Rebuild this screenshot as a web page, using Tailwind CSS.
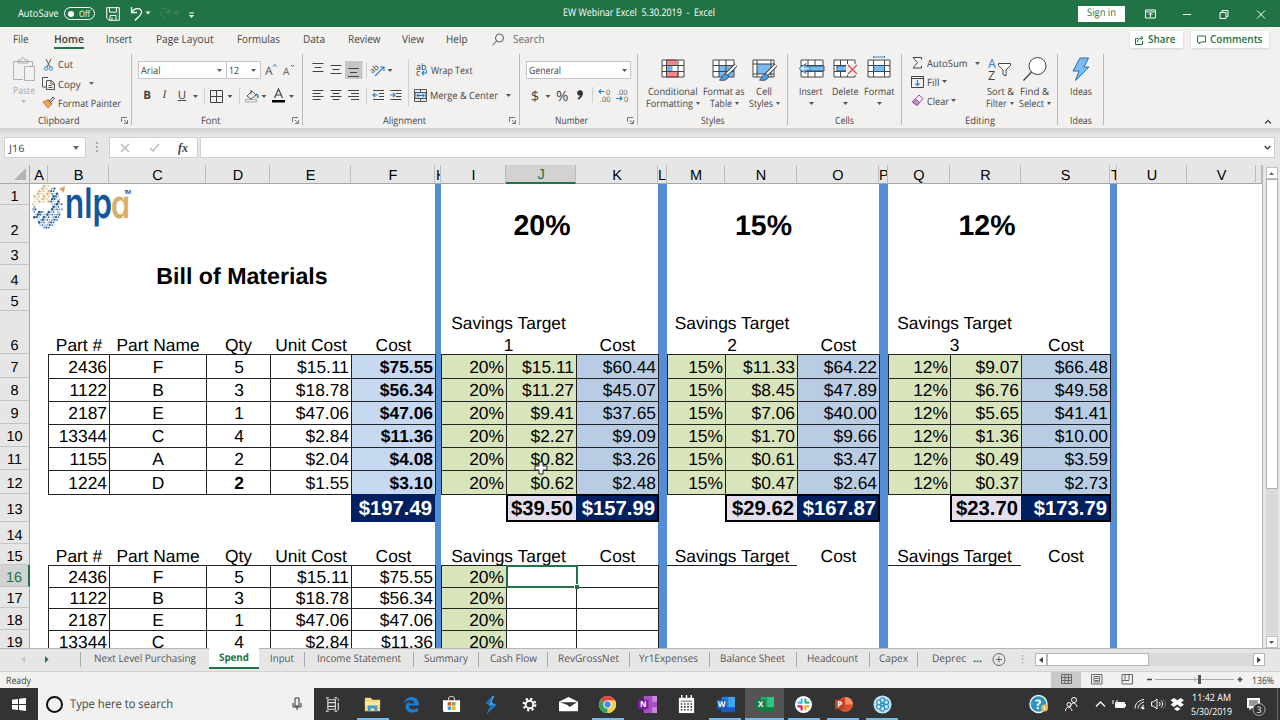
<!DOCTYPE html>
<html lang="en">

<head>
    <meta charset="UTF-8" />
    <meta name="viewport" content="width=device-width, initial-scale=1.0" />
    <title>EW Webinar Excel 5.30.2019 - Excel</title>
    <script src="https://cdn.jsdelivr.net/npm/@tailwindcss/browser@4"></script>
</head>

<body class="w-[1280px] h-[720px] overflow-hidden flex flex-col bg-[#e6e6e6] font-['Open_Sans','Noto_Sans',sans-serif] text-[10px] leading-none text-[#444] whitespace-nowrap [text-rendering:geometricPrecision]">

    <!-- title bar -->
    <header class="h-[27px] shrink-0 bg-[#217346] text-white flex items-center">
        <div class="w-[500px] flex items-center pl-[18px]">
            <span class="w-[46px]"><span data-w="40.5" class="text-[10.5px]">AutoSave</span></span>
            <span class="w-[31px] h-[13px] border border-white rounded-full flex items-center pl-[3px] gap-[5px]">
                <i class="size-[6px] rounded-full bg-white"></i><span data-w="11" class="text-[9px]">Off</span>
            </span>
            <svg class="ml-[11px]" width="14" height="14" viewBox="0 0 14 14" fill="none" stroke="#fff"><path d="M.7.7h12.6v12.6H3L.7 11zM3.5.7v4.5h7V.7M4 13V8.500h6V13M6 10.500V13" /></svg>
            <svg class="ml-[10px]" width="65" height="16" viewBox="0 0 65 16" fill="none"><path d="M1.500 1v5.500h5.500M1.500 6.500C4.500 1 12 1.500 11.500 6.500 11 10 7.500 11 5 14.500" stroke="#fff" stroke-width="1.300" /><path d="M15.500 5.500h5l-2.500 3zM59 9h5l-2.500 3zM59 6.500h5v1h-5z" fill="#fff" /><path d="M40 1v5.500h-5.500M40 6.500C37 1 29.500 1 30 6.500 30.500 10 34 11 36 14M43.500 6h5l-2.500 3z" stroke="#43875f" /></svg>
        </div>
        <div class="flex-1 pl-[63px] -mt-[2px]"><span data-w="152" class="text-[10.5px] whitespace-pre">EW Webinar Excel  5.30.2019  -  Excel</span></div>
        <div class="w-[47px] h-[16px] bg-white text-[#217346] flex items-center justify-center"><span data-w="29" class="text-[10.5px]">Sign in</span></div>
        <svg class="ml-[20px] mr-[13px]" width="122" height="14" viewBox="0 0 122 14" fill="none" stroke="#fff"><path d="M.5 3h10v8h-10zM.5 5h10M5.500 10V6.500M3.500 8l2-2 2 2" /><path d="M38 7.500h8M75 5.500h6v6h-6zM77 5V3.500h6v6h-1.500M112 3.500l8 8M120 3.500l-8 8" /></svg>
    </header>

    <!-- ribbon tabs -->
    <nav class="h-[25px] shrink-0 bg-[#f2f1f0] flex items-center text-[11px] pl-[13px]">
        <span class="w-[41px]"><span data-w="15.5">File</span></span>
        <span class="w-[52px] h-[22px] self-start pt-[7px]"><span data-w="30" class="font-semibold h-[15px] border-b-2 border-[#217346]">Home</span></span>
        <span class="w-[50px]"><span data-w="26">Insert</span></span>
        <span class="w-[81px]"><span data-w="57.5">Page Layout</span></span>
        <span class="w-[66px]"><span data-w="43">Formulas</span></span>
        <span class="w-[45px]"><span data-w="22">Data</span></span>
        <span class="w-[54px]"><span data-w="32.5">Review</span></span>
        <span class="w-[44px]"><span data-w="22">View</span></span>
        <span class="w-[46px]"><span data-w="21.500">Help</span></span>
        <svg class="mr-[8px]" width="13" height="14" viewBox="0 0 13 14" fill="none" stroke="#555"><circle cx="7.500" cy="5" r="4" /><path d="M4.500 8L.5 12.500" /></svg>
        <span class="w-[617px]"><span data-w="31.5" class="text-[#666]">Search</span></span>
        <div class="w-[53px] h-[17px] bg-white shadow-sm text-[#217346] font-semibold flex items-center pl-[5px] gap-[4px]">
            <svg width="9" height="10" viewBox="0 0 9 10" fill="none" stroke="#217346"><path d="M3 3.500H.5v6h7V6M2.500 7c0-3 2-4 5-4M5.500 1l2.500 2-2.500 2" /></svg>
            <span data-w="27.5">Share</span>
        </div>
        <div class="ml-[8px] w-[78px] h-[17px] bg-white shadow-sm text-[#217346] font-semibold flex items-center pl-[6px] gap-[4px]">
            <svg width="9" height="10" viewBox="0 0 9 10" fill="none" stroke="#217346"><path d="M.5 1h8v6H4L2 9V7H.5z" /></svg>
            <span data-w="52.5">Comments</span>
        </div>
    </nav>

    <!-- ribbon -->
    <section class="h-[76px] shrink-0 bg-[#f2f1f0] flex items-start pt-[2px]">

        <div class="w-[132px] h-[71px] border-r border-[#b9b9b9] flex flex-col">
            <div class="h-[61px] flex">
                <div class="w-[42px] pl-[5px] pt-[3px] flex flex-col items-center text-[#aaa]">
                    <svg width="24" height="26" viewBox="0 0 24 26" fill="none" stroke="#b0b0b0"><path d="M1.500 4.500h19v5M11 22.500H1.500v-18M6 6V3h3c0-3 4-3 4 0h3v3zM12.500 9.500h10v14h-10z" fill="#f2f1f0" /></svg>
                    <span class="mt-[2px]" data-w="22">Paste</span>
                    <svg class="mt-[5px]" width="5" height="3"><path d="M0 0h5L2.500 3z" fill="#bbb" /></svg>
                </div>
                <div>
                    <div class="h-[20px] flex items-center"><svg class="mr-[3px]" width="13" height="13" viewBox="0 0 13 13" fill="none"><path d="M4 1l4 8M9 1L5 9" stroke="#555" /><circle cx="4" cy="10.500" r="1.700" stroke="#2f86cf" /><circle cx="9" cy="10.500" r="1.700" stroke="#2f86cf" /></svg><span data-w="15">Cut</span></div>
                    <div class="h-[19px] flex items-center"><svg class="mr-[3px]" width="13" height="13" viewBox="0 0 13 13" fill="none" stroke="#555"><path d="M4 10H.5V.5H6M4.500 3.500h5l3 3v6h-8zM9 3.500V7h3M6.500 8.500h3M6.500 10.500h4" /></svg><span data-w="22.500">Copy</span><svg class="ml-[8px]" width="5" height="3"><path d="M0 0h5L2.500 3z" fill="#666" /></svg></div>
                    <div class="h-[19px] flex items-center"><svg class="mr-[3px]" width="13" height="13" viewBox="0 0 13 13" fill="none"><path d="M1 6l5 6 4-4-4-4z" fill="#f0a35c" stroke="#d9782d" /><path d="M6 3.500L9.500 7.500M7.500 5L11 1l1.500 1.500L9 6" stroke="#444" /></svg><span data-w="63">Format Painter</span></div>
                </div>
            </div>
            <div class="flex pl-[38px] pt-[2px]"><span data-w="41.5">Clipboard</span><svg class="ml-auto mr-[3px] mt-[2px]" width="7" height="7" fill="none" stroke="#777"><path d="M.5 5V.5H6M3 3l3 3M6.500 3v3.500H3" /></svg></div>
        </div>

        <div class="w-[171px] h-[71px] border-r border-[#b9b9b9] flex flex-col">
            <div class="h-[61px] pl-[6px] pt-[7px]">
                <div class="flex items-center h-[18px]">
                    <div class="w-[89px] h-[18px] bg-white border border-[#c6c6c6] flex items-center justify-between pl-[2px] pr-[4px]"><span data-w="19.5">Arial</span><svg width="5" height="3"><path d="M0 0h5L2.500 3z" fill="#555" /></svg></div>
                    <div class="w-[35px] h-[18px] -ml-px bg-white border border-[#c6c6c6] flex items-center justify-between pl-[2px] pr-[4px]"><span data-w="10">12</span><svg width="5" height="3"><path d="M0 0h5L2.500 3z" fill="#555" /></svg></div>
                    <svg class="ml-[4px]" width="32" height="14" viewBox="0 0 32 14" fill="none"><text x="0" y="12" font-size="12" fill="#555">A</text><path d="M8 3.500l1.800-2 1.800 2M26 2l1.500 1.700L29 2" stroke="#2f6cb0" /><text x="18" y="12" font-size="10" fill="#555">A</text></svg>
                </div>
                <div class="flex items-center h-[16px] mt-[9px] text-[11.500px]">
                    <span class="w-[18px] text-center font-bold">B</span>
                    <span class="w-[17px] text-center italic font-['Liberation_Serif']">I</span>
                    <span class="w-[18px] text-center underline">U</span>
                    <svg width="98" height="18" viewBox="191 86 98 18" fill="none"><path d="M193 94h5l-2.500 3zM227.500 94h5l-2.500 3zM261.500 94h5l-2.500 3z" fill="#555" /><path d="M204.500 87v16M239.500 87v16" stroke="#d0d0d0" /><path d="M210.500 89.500h12v12h-12zM216.500 89.500v12M210.500 95.500h12" stroke="#444" /><path d="M247 95l5-5 4 4-5 4zM251 89v4" stroke="#555" /><path d="M256 93c2 1 2 3 1.500 4" stroke="#2f86cf" stroke-width="1.500" /><path d="M245.500 98.500h11v2.500h-11z" stroke="#aaa" fill="#eee" /><path d="M274.500 97L278.500 88l4 9M276 94h5" stroke="#444" stroke-width="1.200" /><path d="M272 99h13v2.500h-13z" fill="#000" /></svg>
                    <svg width="5" height="3"><path d="M0 0h5L2.500 3z" fill="#555" /></svg>
                </div>
            </div>
            <div class="flex pl-[69px] pt-[2px]"><span data-w="19.5">Font</span><svg class="ml-auto mr-[3px] mt-[2px]" width="7" height="7" fill="none" stroke="#777"><path d="M.5 5V.5H6M3 3l3 3M6.500 3v3.500H3" /></svg></div>
        </div>

        <div class="w-[217px] h-[71px] border-r border-[#b9b9b9] flex flex-col">
            <div class="h-[61px] flex">
                <svg class="shrink-0" width="109" height="55" viewBox="303 54 109 55" fill="none">
                    <path d="M345 61h17.500v18H345z" fill="#c8c6c4" />
                    <path d="M312.500 63.500h11M314.500 67.500h7M312.500 71.500h11M330.500 65.500h11M332.500 69.500h7M330.500 73.500h11M348 68.500h11M350 72.500h7M348 76.500h11" stroke="#444" />
                    <path d="M312.500 90.500h11M312.500 93.500h8M312.500 96.500h11M312.500 99.500h8M330.500 90.500h11M332.500 93.500h7M330.500 96.500h11M332.500 99.500h7M348 90.500h11M351 93.500h8M348 96.500h11M351 99.500h8M373 90.500h11M379 93.500h5M379 96.500h5M373 99.500h11M390.500 90.500h11M396 93.500h5.500M396 96.500h5.500M390.500 99.500h11" stroke="#444" />
                    <path d="M378 95h-5M375 93l-2 2 2 2M390 95h5M393 93l2 2-2 2M375 76l9-9M380 67h4v4" stroke="#2f86cf" stroke-width="1.200" />
                    <path d="M366.500 62v16M366.500 88v16M408.500 59v47" stroke="#d0d0d0" />
                    <path d="M387.500 69h5l-2.500 3z" fill="#555" />
                    <text x="370" y="72" font-size="8" fill="#444" transform="rotate(-40 374 70)">ab</text>
                </svg>
                <div class="pt-[7px]">
                    <div class="h-[18px] flex items-center"><svg class="mr-[2px] ml-[3px]" width="14" height="14" viewBox="0 0 14 14" fill="none"><text x="1" y="6.500" font-size="9" fill="#444">ab</text><text x="1" y="13" font-size="9" fill="#444">c</text><path d="M11.500 7v3H7M9 8l-2 2 2 2" stroke="#2f86cf" stroke-width="1.200" /></svg><span data-w="41.5">Wrap Text</span></div>
                    <div class="h-[18px] mt-[7px] flex items-center"><svg class="mr-[3px] ml-[2px]" width="13" height="13" viewBox="0 0 13 13" fill="none"><path d="M.5.5h12v12H.5zM6.500.5v3M6.500 10v2.500" stroke="#555" /><path d="M1 3.500h11v6H1z" fill="#c5e3f8" stroke="#555" /><path d="M3 6.500h7M4.500 4.800L2.800 6.500l1.700 1.700M8.500 4.800l1.700 1.700-1.700 1.700" stroke="#1f6fb8" /></svg><span data-w="68">Merge &amp; Center</span><svg class="ml-[8px]" width="5" height="3"><path d="M0 0h5L2.500 3z" fill="#555" /></svg></div>
                </div>
            </div>
            <div class="flex pl-[80px] pt-[2px]"><span data-w="43">Alignment</span><svg class="ml-auto mr-[3px] mt-[2px]" width="7" height="7" fill="none" stroke="#777"><path d="M.5 5V.5H6M3 3l3 3M6.500 3v3.500H3" /></svg></div>
        </div>

        <div class="w-[118px] h-[71px] border-r border-[#b9b9b9] flex flex-col">
            <div class="h-[61px] pl-[6px] pt-[7px]">
                <div class="w-[105px] h-[18px] bg-white border border-[#c6c6c6] flex items-center justify-between pl-[2px] pr-[3px]"><span data-w="32">General</span><svg width="5" height="3"><path d="M0 0h5L2.500 3z" fill="#555" /></svg></div>
                <svg class="mt-[6px]" width="106" height="20" viewBox="526 85 106 20" fill="none">
                    <text x="531" y="101" font-size="14" fill="#444" textLength="7.500">$</text>
                    <text x="556" y="101" font-size="14" fill="#444" textLength="12.500" lengthAdjust="spacingAndGlyphs">%</text>
                    <circle cx="580" cy="93" r="2.800" fill="#333" /><path d="M582 93c0 3-1.500 4.500-4 6" stroke="#333" stroke-width="1.800" />
                    <path d="M545.500 95h5l-2.500 3z" fill="#555" /><path d="M592.500 87v16" stroke="#d0d0d0" />
                    <text x="606" y="95" font-size="7.500" fill="#555">0</text><text x="600" y="101.500" font-size="7.500" fill="#555">.00</text>
                    <text x="617" y="95" font-size="7.500" fill="#555">.00</text><text x="624" y="101.500" font-size="7.500" fill="#555">0</text>
                    <path d="M604.500 91.500h-6M601 89.500l-2 2 2 2M616 98.500h6M620 96.500l2 2-2 2" stroke="#2f86cf" stroke-width="1.200" />
                </svg>
            </div>
            <div class="flex pl-[35px] pt-[2px]"><span data-w="33">Number</span><svg class="ml-auto mr-[3px] mt-[2px]" width="7" height="7" fill="none" stroke="#777"><path d="M.5 5V.5H6M3 3l3 3M6.500 3v3.500H3" /></svg></div>
        </div>

        <div class="w-[150px] h-[71px] border-r border-[#b9b9b9] flex flex-col">
            <div class="h-[61px] flex pl-[6px] pt-[2px]">
                <div class="w-[57px] flex flex-col items-center">
                    <svg width="24" height="26" viewBox="0 0 24 26" fill="none"><path d="M1 4h22v17H1z" fill="#fff" /><path d="M5.500 4h9.500v5.500H5.500zM5.500 15.500H17V21H5.500z" fill="#f8878b" stroke="#d6484d" /><path d="M5.500 9.500h6v6h-6z" fill="#6cb2ec" /><path d="M1 4h22v17H1zM5.500 4v17M17 4v17M1 9.500h22M1 15.500h22" stroke="#444" /></svg>
                    <span class="mt-[4px]" data-w="49.5">Conditional</span>
                    <div class="mt-[2px] flex items-center gap-[3px]"><span data-w="47">Formatting</span><svg width="4" height="3"><path d="M0 0h4L2 3z" fill="#555" /></svg></div>
                </div>
                <div class="w-[46px] flex flex-col items-center">
                    <svg width="25" height="26" viewBox="0 0 25 26" fill="none"><path d="M1 4h21v17H1z" fill="#fff" /><path d="M7 9.500h15V21H7z" fill="#79bbf2" /><path d="M1 4h21v17H1zM7 4v17M14 4v17M1 9.500h21M1 15.500h21" stroke="#444" /><path d="M24 9L14 19" stroke="#444" stroke-width="4" /><path d="M24 9L14 19" stroke="#fff" stroke-width="2" /><path d="M14.500 18c-5 0-4 4-7 6 5 1 8.500 0 9-4z" fill="#4f9ddd" stroke="#28517c" /></svg>
                    <span class="mt-[4px]" data-w="41.5">Format as</span>
                    <div class="mt-[2px] flex items-center gap-[3px]"><span data-w="22">Table</span><svg width="4" height="3"><path d="M0 0h4L2 3z" fill="#555" /></svg></div>
                </div>
                <div class="w-[34px] flex flex-col items-center">
                    <svg width="25" height="26" viewBox="0 0 25 26" fill="none"><path d="M1 4h21v17H1z" fill="#fff" /><path d="M5 8h14v10H5z" fill="#79bbf2" /><path d="M1 4h21v17H1zM5 4v17M1 8h21M1 18h21M19 4v17" stroke="#444" /><path d="M24 9L14 19" stroke="#444" stroke-width="4" /><path d="M24 9L14 19" stroke="#fff" stroke-width="2" /><path d="M14.500 18c-5 0-4 4-7 6 5 1 8.500 0 9-4z" fill="#4f9ddd" stroke="#28517c" /></svg>
                    <span class="mt-[4px]" data-w="16">Cell</span>
                    <div class="mt-[2px] flex items-center gap-[3px]"><span data-w="24">Styles</span><svg width="4" height="3"><path d="M0 0h4L2 3z" fill="#555" /></svg></div>
                </div>
            </div>
            <div class="text-center pt-[2px]"><span data-w="23.500">Styles</span></div>
        </div>

        <div class="w-[114px] h-[71px] border-r border-[#b9b9b9] flex flex-col">
            <div class="h-[61px] flex pl-[6px] pt-[2px]">
                <div class="w-[34px] flex flex-col items-center">
                    <svg width="27" height="26" viewBox="0 0 27 26" fill="none"><path d="M3 4h22v17H3z" fill="#fff" /><path d="M3 4h22v17H3zM10 4v17M17 4v17M3 9.500h22M3 15.500h22" stroke="#444" /><path d="M9 10h17v5H9z" fill="#79bbf2" stroke="#28517c" /><path d="M12 11H6l2-3.500-7 5 7 5L6 14h6z" fill="#cfe8fb" stroke="#2f86cf" /></svg>
                    <span class="mt-[4px]" data-w="23.5">Insert</span>
                    <svg class="mt-[6px]" width="5" height="3"><path d="M0 0h5L2.500 3z" fill="#555" /></svg>
                </div>
                <div class="w-[34px] flex flex-col items-center">
                    <svg width="25" height="26" viewBox="0 0 25 26" fill="none"><path d="M1 4h21v17H1z" fill="#fff" /><path d="M1 4h21v17H1zM7.500 4v17M14.500 4v17M1 9.500h21M1 15.500h21" stroke="#444" /><path d="M4 10h10v5H4z" fill="#79bbf2" stroke="#28517c" /><path d="M13 8h11v11H13z" fill="#f2f1f0" /><path d="M15 9l9 9M24 9l-9 9" stroke="#e04b50" stroke-width="1.300" /></svg>
                    <span class="mt-[4px]" data-w="26.5">Delete</span>
                    <svg class="mt-[6px]" width="5" height="3"><path d="M0 0h5L2.500 3z" fill="#555" /></svg>
                </div>
                <div class="w-[34px] flex flex-col items-center">
                    <svg width="24" height="26" viewBox="0 0 24 26" fill="none"><path d="M1 4h22v17H1z" fill="#fff" /><path d="M1 4h22v17H1zM6.500 4v17M17.500 4v17M1 9.500h22M1 15.500h22" stroke="#444" /><path d="M6.500 9.500h11v6h-11z" fill="#79bbf2" stroke="#28517c" /><path d="M6.500 1h11M6.500 0v2M17.500 0v2" stroke="#2f86cf" /></svg>
                    <span class="mt-[4px]" data-w="30.5">Format</span>
                    <svg class="mt-[6px]" width="5" height="3"><path d="M0 0h5L2.500 3z" fill="#555" /></svg>
                </div>
            </div>
            <div class="text-center pt-[2px]"><span data-w="19">Cells</span></div>
        </div>

        <div class="w-[156px] h-[71px] border-r border-[#b9b9b9] flex flex-col">
            <div class="h-[61px] flex pl-[9px]">
                <div class="w-[72px]">
                    <div class="h-[18px] flex items-center"><svg class="ml-[1px] mr-[4px]" width="11" height="12" fill="none" stroke="#444"><path d="M9.500 2.500V.5H1l4.500 5L1 11h8.500V9" /></svg><span data-w="40.500">AutoSum</span><svg class="ml-[7px]" width="5" height="3"><path d="M0 0h5L2.500 3z" fill="#555" /></svg></div>
                    <div class="h-[19px] flex items-center"><svg class="mr-[3px]" width="13" height="12" fill="none" stroke="#444"><path d="M.5.5h12v11H.5zM.5 2.500h12" /><path d="M6.500 4v5.500M4.500 7.500l2 2 2-2" stroke="#2f86cf" stroke-width="1.200" /></svg><span data-w="12.5">Fill</span><svg class="ml-[2px]" width="5" height="3"><path d="M0 0h5L2.500 3z" fill="#555" /></svg></div>
                    <div class="h-[19px] flex items-center"><svg class="mr-[3px]" width="13" height="13" fill="none" stroke="#a142a8"><path d="M8 1l4 3.500-6 7L1.500 8z" fill="#fff" /><path d="M4.500 5L1.500 8 6 11.500 8.500 8.500z" fill="#c88fd0" /></svg><span data-w="22">Clear</span><svg class="ml-[2px]" width="5" height="3"><path d="M0 0h5L2.500 3z" fill="#555" /></svg></div>
                </div>
                <div class="w-[34px] pt-[2px] flex flex-col items-center">
                    <svg width="26" height="26" viewBox="0 0 26 26" fill="none"><text x="1" y="12" font-size="12.500" fill="#2f86cf">A</text><text x="1" y="23.500" font-size="12.500" fill="#444">Z</text><path d="M11.500 7.500h12v2L19 14v6l-3-1.500V14l-4.500-4.500z" stroke="#444" fill="#fff" /></svg>
                    <span class="mt-[4px]" data-w="27">Sort &amp;</span>
                    <div class="mt-[2px] flex items-center gap-[3px]"><span data-w="20.5">Filter</span><svg width="4" height="3"><path d="M0 0h4L2 3z" fill="#555" /></svg></div>
                </div>
                <div class="w-[35px] pt-[2px] flex flex-col items-center">
                    <svg width="26" height="26" viewBox="0 0 26 26" fill="none" stroke="#444"><circle cx="15.500" cy="10" r="8.500" fill="#fff" /><path d="M9.500 16L1.500 24.500" stroke-width="1.300" /></svg>
                    <span class="mt-[4px]" data-w="29">Find &amp;</span>
                    <div class="mt-[2px] flex items-center gap-[3px]"><span data-w="25">Select</span><svg width="4" height="3"><path d="M0 0h4L2 3z" fill="#555" /></svg></div>
                </div>
            </div>
            <div class="text-center pt-[2px]"><span data-w="30">Editing</span></div>
        </div>

        <div class="w-[46px] h-[71px] border-r border-[#b9b9b9] flex flex-col items-center">
            <div class="h-[61px] pt-[2px] flex flex-col items-center">
                <svg width="18" height="26" viewBox="0 0 18 26"><path d="M8 2h8.500l-4.500 9h5L3.500 24.500 7 15H1z" fill="#79bbf2" stroke="#2a6cab" stroke-linejoin="round" /></svg>
                <span class="mt-[4px]" data-w="22">Ideas</span>
            </div>
            <span class="mt-[2px]" data-w="22">Ideas</span>
        </div>
        <svg class="ml-auto mr-[8px] mt-[65px]" width="8" height="5" fill="none" stroke="#444" stroke-width="1.300"><path d="M1 4.500l3-3 3 3" /></svg>
    </section>

    <!-- formula bar -->
    <section class="h-[37px] shrink-0 bg-linear-to-b from-[#cfcfcb] to-[#e6e6e6] to-20% flex items-start pt-[9px] pl-[4px]">
        <div class="w-[82px] h-[21px] bg-white border border-[#d0d0d0] flex items-center justify-between pl-[4px] pr-[5px]"><span data-w="15.500">J16</span><svg width="7" height="4"><path d="M0 0h6L3 4z" fill="#666" /></svg></div>
        <svg class="mx-[10px] mt-[5px]" width="3" height="11" fill="#aaa"><path d="M0 0h2v2H0zM0 4h2v2H0zM0 8h2v2H0z" /></svg>
        <div class="w-[89px] h-[21px] bg-white border border-[#d0d0d0] flex items-center">
            <svg class="ml-[10px]" width="40" height="10" fill="none" stroke="#bbb" stroke-width="1.500"><path d="M1 1l8 8M9 1L1 9M30 5l3 3 6-7" /></svg>
            <span class="ml-[18px] font-['Liberation_Serif'] italic font-bold text-[13px]" data-w="10">fx</span>
        </div>
        <div class="ml-[2px] w-[1075px] h-[21px] bg-white border border-[#d0d0d0] flex items-center justify-end pr-[3px]"><svg width="7" height="6" fill="none" stroke="#444" stroke-width="1.500"><path d="M.7 1l2.800 3 2.800-3" /></svg></div>
    </section>

    <!-- sheet -->
    <main class="h-[483px] shrink-0 flex">
        <div id="sheet" class="relative w-[1263px] h-[483px] overflow-hidden grid bg-white text-black text-[17.4px] font-['Liberation_Sans',Arial,sans-serif] border-r border-[#b5b5b5]"></div>
        <div class="flex-1 flex flex-col items-center pt-[2px]">
            <div class="w-[12px] h-[12px] bg-white border border-[#c0c0c0] flex items-center justify-center"><svg width="5" height="3"><path d="M0 3h5L2.500 0z" fill="#666" /></svg></div>
            <div class="w-[12px] h-[310px] bg-white border border-[#b0b0b0]"></div>
            <div class="w-[12px] flex-1 bg-[#dadada]"></div>
            <div class="w-[12px] h-[12px] bg-white border border-[#c0c0c0] flex items-center justify-center"><svg width="5" height="3"><path d="M0 0h5L2.500 3z" fill="#555" /></svg></div>
        </div>
    </main>

    <!-- sheet tabs -->
    <section class="h-[23px] shrink-0 border-t border-[#b5b5b5] bg-[#e6e6e6] flex items-start text-[10.5px] text-[#555]">
        <svg class="mt-[7px]" width="80" height="8"><path d="M25 0v7l-3.500-3.500z" fill="#c5c5c5" /><path d="M45 0v7l3.500-3.500z" fill="#217346" /></svg>
        <div id="tabs" class="w-[910px] flex -mt-px"></div>
        <svg class="mt-[3px]" width="45" height="16" viewBox="990 652 45 16" fill="none" stroke="#666"><circle cx="999" cy="659.500" r="6" /><path d="M996 659.500h6M999 656.500v6" /><path d="M1022.500 655v10" stroke="#aaa" stroke-width="1.500" stroke-dasharray="1.500 2" /></svg>
        <div class="mt-[4px] w-[230px] h-[13px] flex bg-[#dadada]">
            <div class="w-[12px] bg-white border border-[#b5b5b5] flex items-center justify-center"><svg width="4" height="6"><path d="M4 0v6L0 3z" fill="#444" /></svg></div>
            <div class="w-[102px] bg-white border border-[#b5b5b5]"></div>
            <div class="ml-auto w-[12px] bg-white border border-[#b5b5b5] flex items-center justify-center"><svg width="4" height="6"><path d="M0 0v6l4-3z" fill="#444" /></svg></div>
        </div>
    </section>

    <!-- status bar -->
    <section class="h-[17px] shrink-0 border-t border-[#d0d0d0] bg-[#f1f1ef] flex items-center pl-[6px]">
        <span class="w-[1045px]"><span data-w="25">Ready</span></span>
        <svg width="200" height="16" viewBox="1051 672 200 16" fill="none" stroke="#666">
            <path d="M1051 671h30v17h-30z" fill="#cacaca" stroke="none" />
            <path d="M1061.500 674.500h10v9h-10zM1065 674.500v9M1068.500 674.500v9M1061.500 677.500h10M1061.500 680.500h10" />
            <path d="M1091.500 674.500h10.500v9.500h-10.500zM1094 676.500h5.500v5.500H1094zM1095 678.500h3.500M1095 680.500h3.500" />
            <path d="M1122 674.500h10.500v9.500H1122zM1125 675v5.500M1129 675v5.500M1122 680.500h7" />
            <path d="M1155 679.500h79M1195 677v5" stroke="#aaa" />
            <path d="M1147 679.500h5M1237.500 679.500h5M1240 677v5" stroke="#444" stroke-width="1.500" /><path d="M1198 675h3v9h-3z" fill="#555" stroke="none" />
        </svg>
        <span class="ml-[1px]" data-w="22">136%</span>
    </section>

    <!-- taskbar -->
    <footer class="h-[32px] shrink-0 bg-[#333] text-white flex items-center">
        <svg class="ml-[12px] mr-[12px]" width="14" height="13" fill="#fff"><path d="M0 1.800L6 1v5H0zM7 .8L14 0v6H7zM0 7h6v5l-6-.8zM7 7h7v6l-7-.9z" /></svg>
        <div class="w-[276px] h-full bg-[#f1f1f1] text-[#444] flex items-center">
            <i class="ml-[8px] size-[17px] rounded-full border-[2.500px] border-[#111]"></i>
            <span class="ml-[7px] w-[222px]"><span data-w="103" class="text-[12px]">Type here to search</span></span>
            <svg width="10" height="14" fill="none" stroke="#333"><path d="M3 1h4v8H3zM1 6v4h8V6M5 10v3" /></svg>
        </div>
        <div id="apps" class="flex h-full"></div>
        <svg class="ml-[127px]" width="162" height="22" viewBox="1029 693 162 22" fill="none" stroke="#fff">
            <circle cx="1038.500" cy="704" r="8.500" fill="#2b93c4" stroke="#e8f4fa" stroke-width="1.500" /><text x="1035" y="709" font-size="13" font-weight="bold" fill="#fff" stroke="none">?</text><circle cx="1044.500" cy="708" r="3.500" fill="#f0b93e" stroke="none" /><path d="M1044.500 706v4" />
            <circle cx="1074" cy="700" r="2.500" /><path d="M1070.500 707c0-5 6-5 6.500 0" /><circle cx="1069" cy="704.500" r="2" /><path d="M1065.500 711c0-5 6-5 6.500 0" />
            <path d="M1096 706.500l4.500-4.500 4.500 4.500" stroke-width="1.300" />
            <path d="M1115.500 702.500h9v5h-9zM1125.500 704v2.500M1113 700v4M1117 700v2" /><path d="M1116.500 703.500h7v3h-7z" fill="#fff" />
            <path d="M1135 708.500c0-5 4-8.500 9-9M1138 708.500c0-3 3-6 6-6.500M1141 708.500c0-1.500 1.500-3 3-3.500" /><circle cx="1143" cy="708" r="1" fill="#fff" />
            <path d="M1151.500 702h2l3.500-3v10l-3.500-3h-2zM1159 702c1.500 1 1.500 3 0 4M1161 700.500c2 2 2 5 0 7" /><path d="M1163 699c3 3 3 7 0 10" stroke="#777" />
            <path d="M1174 698l-3.500 2.300 3 2.200-3 2.300 3.500 2.200 3.300-2.400 3.200 2.400 3.500-2.200-3-2.300 3-2.200-3.500-2.300-3.200 2.300zM1174 709l3.300-2.300 3.200 2.300-3.200 2z" fill="#fff" stroke="none" />
        </svg>
        <div class="w-[41px] flex flex-col items-center gap-[4px]"><span data-w="39">11:42 AM</span><span data-w="41">5/30/2019</span></div>
        <svg class="ml-[14px]" width="24" height="24" viewBox="1246 692 24 24"><path d="M1247 698h13v10h-8l-2.500 2.500V708H1247z" fill="#fff" /><path d="M1249 701h9M1249 703h9M1249 705h6" stroke="#333" /><circle cx="1259" cy="709.500" r="6" fill="#333" stroke="#aaa" /><text x="1256.500" y="713" font-size="9" fill="#fff">3</text></svg>
        <i class="ml-[7px] w-px h-full bg-[#666]"></i>
    </footer>

    <script>
        const colNames = ["", "A", "B", "C", "D", "E", "F", "H", "I", "J", "K", "L", "M", "N", "O", "P", "Q", "R", "S", "T", "U", "V", " "];
        const colX = [0, 30, 48, 109, 206, 270, 351, 435, 441, 506, 576, 658, 667, 725, 797, 879, 888, 950, 1021, 1110, 1117, 1187, 1256, 1262];
        const rowY = [165, 184, 205, 243, 265, 290, 311, 354, 378, 401, 424, 447, 470, 494, 522, 544, 565, 587, 608, 630, 652];

        const sheet = document.getElementById("sheet");
        const sizes = (a) => a.slice(1).map((v, i) => v - a[i] + "px").join(" ");
        sheet.style.gridTemplateColumns = sizes(colX);
        sheet.style.gridTemplateRows = sizes(rowY);

        function cell(col, row, text, classes, colSpan = 1, rowSpan = 1) {
            const div = document.createElement("div");
            const c = colNames.indexOf(col) + 1;
            div.className = "flex items-end leading-none overflow-hidden " + classes;
            div.style.gridArea = `${row + 1} / ${c} / span ${rowSpan} / span ${colSpan}`;
            div.innerHTML = text;
            sheet.appendChild(div);
            return div;
        }

        // headings
        cell("", 0, `<svg class="ml-[14px] mb-[3px]" width="12" height="12"><path d="M12 0v12H0z" fill="#b4b4b4"/></svg>`, "bg-[#e6e6e6] border-b border-r border-[#a8a8a8]");
        colNames.slice(1).forEach((name) => {
            const look = name === "J" ? "bg-[#d2d2d2] text-[#217346] border-b-2 border-b-[#217346] border-r-[#bcbcbc]" : "bg-[#e6e6e6] border-b border-b-[#a8a8a8] border-r-[#bcbcbc]";
            const align = "HT".includes(name) ? "pl-[1px] " : "LP".includes(name) ? "pl-0 " : "justify-center pl-[1px] ";
            cell(name, 0, name, align + "text-[14.5px] border-r " + look);
        });
        for (let r = 1; r <= 19; r++) {
            const look = r === 16 ? "bg-[#d2d2d2] text-[#217346] border-r-2 border-r-[#217346]" : "bg-[#e6e6e6] border-r border-r-[#a8a8a8]";
            const pad = r === 2 || r === 13 ? "pb-[4px]" : [1, 6, 14, 15].includes(r) ? "pb-0" : r > 6 && r < 13 ? "pb-[2px]" : "pb-[1px]";
            cell("", r, String(r), `justify-center text-[14.5px] border-b border-b-[#c4c4c4] ${pad} ${look}`);
        }

        // blue dividers
        ["H", "L", "P", "T"].forEach((c) => cell(c, 1, "", "bg-[#538dd5]", 1, 19));

        cell("B", 4, "Bill of Materials", "justify-center font-bold text-[23.2px] pb-[2px] pl-[1px]", 5);
        cell("J", 2, "20%", "justify-center font-bold text-[28.5px] pb-[3px] pl-[2px] overflow-visible");
        cell("N", 2, "15%", "justify-center font-bold text-[28.5px] pb-[3px] pl-[5px] overflow-visible");
        cell("R", 2, "12%", "justify-center font-bold text-[28.5px] pb-[3px] pl-[3px] overflow-visible");

        const grid = "border border-[#222] -mr-px -mb-px pr-[2px] ";
        const parts = [
            ["2436", "F", "5", "$15.11", "$75.55"],
            ["1122", "B", "3", "$18.78", "$56.34"],
            ["2187", "E", "1", "$47.06", "$47.06"],
            ["13344", "C", "4", "$2.84", "$11.36"],
            ["1155", "A", "2", "$2.04", "$4.08"],
            ["1224", "D", "2", "$1.55", "$3.10"],
        ];
        [6, 15].forEach((r) => {
            ["Part #", "Part Name", "Qty", "Unit Cost", "Cost"].forEach((t, i) => cell("BCDEF"[i], r, t, "justify-center overflow-visible z-10 pl-[1px]"));
        });
        parts.forEach((p, i) => {
            const bottom = "pb-[2px] ";
            const lower = "pb-[1px] ";
            const r = 7 + i;
            cell("B", r, p[0], grid + bottom + "justify-end");
            cell("C", r, p[1], grid + bottom + "justify-center pl-[2px]");
            cell("D", r, p[2], grid + bottom + "justify-center pl-[3px]" + (i === 5 ? " font-bold" : ""));
            cell("E", r, p[3], grid + bottom + "justify-end");
            cell("F", r, p[4], grid + bottom + "justify-end font-bold bg-[#c6d9f1]");
            if (i > 3) return;
            cell("B", r + 9, p[0], grid + lower + "justify-end");
            cell("C", r + 9, p[1], grid + lower + "justify-center pl-[2px]");
            cell("D", r + 9, p[2], grid + lower + "justify-center pl-[3px]");
            cell("E", r + 9, p[3], grid + lower + "justify-end");
            cell("F", r + 9, p[4], grid + lower + "justify-end");
            cell("I", r + 9, "20%", grid + lower + "justify-end bg-[#d8e4bc]");
            cell("J", r + 9, "", grid);
            cell("K", r + 9, "", grid);
        });
        cell("F", 13, "$197.49", "justify-end font-bold text-[20.3px] pb-[3px] pr-[3px] bg-[#002060] text-white");

        const targets = [
            { cols: "IJK", pct: "20%", save: ["$15.11", "$11.27", "$9.41", "$2.27", "$0.82", "$0.62"], cost: ["$60.44", "$45.07", "$37.65", "$9.09", "$3.26", "$2.48"], total: ["$39.50", "$157.99"] },
            { cols: "MNO", pct: "15%", save: ["$11.33", "$8.45", "$7.06", "$1.70", "$0.61", "$0.47"], cost: ["$64.22", "$47.89", "$40.00", "$9.66", "$3.47", "$2.64"], total: ["$29.62", "$167.87"] },
            { cols: "QRS", pct: "12%", save: ["$9.07", "$6.76", "$5.65", "$1.36", "$0.49", "$0.37"], cost: ["$66.48", "$49.58", "$41.41", "$10.00", "$3.59", "$2.73"], total: ["$23.70", "$173.79"] },
        ];
        targets.forEach((t, n) => {
            const [a, b, c] = t.cols;
            cell(a, 6, `<div class="text-center leading-[21.5px] -mb-[2px] w-full">Savings Target<br>${n + 1}</div>`, "", 2);
            cell(c, 6, "Cost", "justify-center pl-[1px]");
            cell(a, 15, "Savings Target", "justify-center overflow-visible z-10" + (n ? " border-b border-[#222] -mb-px" : ""), 2);
            cell(c, 15, "Cost", "justify-center pl-[1px]");
            for (let i = 0; i < 6; i++) {
                cell(a, 7 + i, t.pct, grid + "pb-[2px] justify-end bg-[#d8e4bc]");
                cell(b, 7 + i, t.save[i], grid + "pb-[2px] justify-end bg-[#d8e4bc]");
                cell(c, 7 + i, t.cost[i], grid + "pb-[2px] justify-end bg-[#b8cce4]");
            }
            cell(b, 13, t.total[0], "justify-end font-bold text-[20.3px] pb-[1px] pr-[3px] border-2 border-r-0 border-black bg-[#e4dfec]");
            cell(c, 13, t.total[1], "justify-end font-bold text-[20.3px] pb-[1px] pr-[2px] border-2 border-l-0 border-black bg-[#002060] text-white -mr-px");
        });

        // active cell J16 with its fill handle
        cell("J", 16, `<i class="absolute -right-[3px] -bottom-[3px] size-[5px] bg-[#217346] border-l border-t border-white"></i>`, "relative z-20 overflow-visible border-2 border-[#217346] -mr-[2px] -mb-[1px]");

        // nlpa logo: dotted globe and word mark
        let dots = "";
        for (let y = 0; y < 17; y++) {
            for (let x = 0; x < 13; x++) {
                const dx = x - 6, dy = y - 8;
                const d = dx * dx / 38 + dy * dy / 66;
                const gap = y > 6 && y < 10 && x > 1 && x < 8;
                if (d > 1 || gap || (x * 7 + y * 5 + x * y) % 4 === 0) continue;
                const gold = y < 8 && x < 8;
                const fill = gold ? ((x + y) % 2 ? "#dcbc80" : "#ecdcb8") : (x + y) % 3 ? "#2a5d9c" : "#a3bcd9";
                dots += `<circle cx="${2 + x * 2.4 + (y % 2)}" cy="${2 + y * 2.6}" r="${0.6 + ((x * 3 + y * 7) % 4) * 0.25}" fill="${fill}"/>`;
            }
        }
        sheet.insertAdjacentHTML("beforeend", `
            <svg class="absolute left-[30px] top-[19px] z-10" width="104" height="48" viewBox="0 0 104 48">
                ${dots}
                <path d="M29 5l6-3-1 7-2-2z" fill="#d9a24e"/>
                <g font-family="Inter" font-weight="600" style="font-feature-settings:'cv11'">
                    <text x="35" y="34" font-size="42" fill="#15559a" textLength="47" lengthAdjust="spacingAndGlyphs">nlp</text>
                    <text x="81" y="34" font-size="39" fill="#d9ae67" textLength="19" lengthAdjust="spacingAndGlyphs">a</text>
                    <text x="94" y="9.500" font-size="5.500" fill="#15559a" textLength="7">TM</text>
                </g>
            </svg>
            <svg class="absolute left-[534px] top-[296px] z-20" width="14" height="14"><path d="M5 1h4v4h4v4H9v4H5V9H1V5h4z" fill="#fff" stroke="#222"/></svg>`);

        // tab: name, left edge, right edge, text left, text width
        const tabs = [
            ["Next Level Purchasing", 80, 209, 93.5, 102], ["Spend", 209, 259, 218.500, 30], ["Input", 259, 305, 269.500, 24],
            ["Income Statement", 305, 414, 316.5, 84], ["Summary", 414, 479, 423.5, 44], ["Cash Flow", 479, 548, 489.500, 47],
            ["RevGrossNet", 548, 630, 557.500, 61], ["Yr1Expenses", 630, 710, 639, 59], ["Balance Sheet", 710, 797, 719.500, 65],
            ["Headcount", 797, 870, 807, 51], ["Capex", 870, 918, 878.500, 29], ["Deprec", 918, 970, 932, 34], ["...", 970, 990, 973, 9],
        ];
        document.getElementById("tabs").innerHTML = tabs.map(([name, l, r, x, w]) => {
            const look = name === "Spend" ? "bg-white text-[#217346] font-bold border-b-2 border-[#217346] h-[21px] pt-[1px]" : name === "..." ? "font-bold text-[#217346] h-[23px]" : "h-[23px]";
            const line = ["Spend", "Deprec", "...", "Next Level Purchasing"].includes(name) ? "" : `<i class="ml-auto w-px h-[15px] bg-[#aaa]"></i>`;
            const first = name === "Next Level Purchasing" ? `<i class="absolute left-0 top-[4px] w-px h-[15px] bg-[#aaa]"></i>` : "";
            return `<div class="relative flex items-center shrink-0 ${look}" style="width:${r - l}px;padding-left:${x - l}px">${first}<span data-w="${w}">${name}</span>${line}</div>`;
        }).join("");

        const office = (dark, mid, light, ch) => `<path d="M6 2h14v16H6z" fill="${mid}"/><path d="M13 2h7v5h-7zM13 7h7v6h-7z" fill="${light}"/><path d="M6 13h14v5H6z" fill="${dark}"/><path d="M1 5h10v10H1z" fill="${dark}"/><text x="6" y="13" font-size="8.500" font-weight="bold" text-anchor="middle" fill="#fff">${ch}</text>`;
        const flower = [0, 60, 120, 180, 240, 300].map((a) => `<circle cx="10" cy="5.500" r="2.400" transform="rotate(${a} 10 10)"/>`).join("");
        // taskbar button: icon, running underline, active
        const apps = [
            [`<path d="M4 5h8v10H4zM4 8h8M4 12h8M15 8v8M2 3h3M11 3h3M2 17h3M11 17h3M15 4v2" fill="none" stroke="#ddd" stroke-width="1.200"/>`],
            [`<path d="M2 3h6l2 2h8v12H2z" fill="#f7d774"/><path d="M2 7h16v4H2z" fill="#fbe7a0"/><path d="M5 11h10v6h-3v-3H8v3H5z" fill="#3d9bd8"/>`, 1],
            [`<path d="M2 9c1-9 16-10 16 2H7c0 5 6 5 10 3v3C10 20 3 18 4 11c1-3 3-4 5-4-2 1-2 2-2 2h6c0-5-8-5-11 0z" fill="#1b7fd6"/>`],
            [`<path d="M7 6V3c0-2 6-2 6 0v3" fill="none" stroke="#eee"/><path d="M1 5.500h18V18H3c-1 0-2-1-2-2z" fill="#fff"/><path d="M6 7.500h3.700v3.700H6z" fill="#e8502c"/><path d="M10.500 7.500h3.700v3.700h-3.700z" fill="#7db52e"/><path d="M6 12h3.700v3.700H6z" fill="#2f9ddb"/><path d="M10.500 12h3.700v3.700h-3.700z" fill="#f5b61b"/>`],
            [`<path d="M12 1L5 8.500l5 3L6 20l10-9.500-5-2.500 3-7z" fill="#3fa9f0"/><path d="M12 1L5 8.500l4 2.500zM6 20l9-9-4-1z" fill="#1c6fc2"/>`],
            [`<circle cx="10" cy="10" r="4" fill="none" stroke="#fff" stroke-width="2"/><circle cx="10" cy="10" r="6" fill="none" stroke="#fff" stroke-width="2.500" stroke-dasharray="2.300 2.410"/>`],
            [`<path d="M0 7l10-5 10 5v10H0z" fill="#fff"/><path d="M1 7.500h18l-8 5-2-2z" fill="#333"/>`],
            [`<circle cx="10" cy="10" r="9" fill="#fff"/><path d="M10 10L2.200 5.500A9 9 0 0117.800 5.500z" fill="#dd4b3e"/><path d="M10 10l7.800-4.500A9 9 0 0110 19z" fill="#f8cd45"/><path d="M10 10v9A9 9 0 012.200 5.500z" fill="#35a153"/><path d="M10 5.500h7.800L10 10z" fill="#f8cd45"/><circle cx="10" cy="10" r="4.300" fill="#fff"/><circle cx="10" cy="10" r="3.300" fill="#4a86e8"/>`, 1],
            [`<path d="M6 1h14v18H6z" fill="#a94fc4"/><path d="M15 1h5v6h-5zM15 13h5v6h-5z" fill="#c98bdd"/><path d="M0 5h11v10H0z" fill="#7b1fa2"/><text x="5.500" y="13" font-size="8.500" font-weight="bold" text-anchor="middle" fill="#fff">N</text>`],
            [`<path d="M2 3h16v16H2z" fill="#fff"/><path d="M5 0v4M10 0v4M15 0v4" stroke="#fff" stroke-width="1.500"/><path d="M4 6.500h12" stroke="#333" stroke-width=".8"/><path d="M4 9.500h12M4 12.500h12M4 15.500h12" stroke="#333" stroke-width="1.600" stroke-dasharray="1.600 1.800"/>`],
            [office("#185abd", "#2b7cd3", "#41a5ee", "W"), 1],
            [office("#107c41", "#21a366", "#33c481", "X"), 1, 1],
            [`<circle cx="10" cy="10" r="9" fill="#fff"/><g stroke-width="2.300" stroke-linecap="round"><path d="M8 4.500v4M4.500 8H8" stroke="#36c5f0"/><path d="M12 4.500V8M15.500 8h-2" stroke="#2eb67d"/><path d="M12 12v3.500M12 12h3.500" stroke="#ecb22e"/><path d="M8 12v3.500M4.500 12H8" stroke="#e01e5a"/></g>`, 1],
            [`<circle cx="12" cy="10" r="8" fill="#d35230"/><path d="M12 2a8 8 0 018 8h-8z" fill="#ff8f6b"/><path d="M1 5h10v10H1z" fill="#b7472a"/><text x="6" y="13" font-size="8.500" font-weight="bold" text-anchor="middle" fill="#fff">P</text>`, 1],
            [`<circle cx="10" cy="10" r="9.500" fill="#bfe3f5"/><g fill="#dff1fa" stroke="#2b93c4" stroke-width="1.300">${flower}<circle cx="10" cy="10" r="1.500"/></g>`, 1],
        ];
        document.getElementById("apps").innerHTML = apps.map(([icon, running, active]) => `
            <div class="w-[39.2px] h-full relative flex items-center justify-center ${active ? "bg-[#545454]" : ""}">
                <svg width="19" height="19" viewBox="0 0 20 20">${icon}</svg>
                ${running ? `<i class="absolute bottom-0 h-[2px] bg-[#76b9ed] ${active ? "w-full" : "w-[32px]"}"></i>` : ""}
            </div>`).join("");

        // condense each label to its own width
        function fitLabels() {
            document.querySelectorAll("[data-w]").forEach((el) => {
                el.style.cssText = "display:inline-block;flex-shrink:0";
                const natural = el.getBoundingClientRect().width;
                el.style.width = natural + "px";
                el.style.transformOrigin = "0 50%";
                el.style.transform = `scaleX(${el.dataset.w / natural})`;
                el.style.marginRight = el.dataset.w - natural + "px";
            });
        }
        // the stylesheet can arrive after this script, so measure again later
        fitLabels();
        window.addEventListener("load", fitLabels);
        new ResizeObserver(fitLabels).observe(sheet);
    </script>
</body>

</html>
